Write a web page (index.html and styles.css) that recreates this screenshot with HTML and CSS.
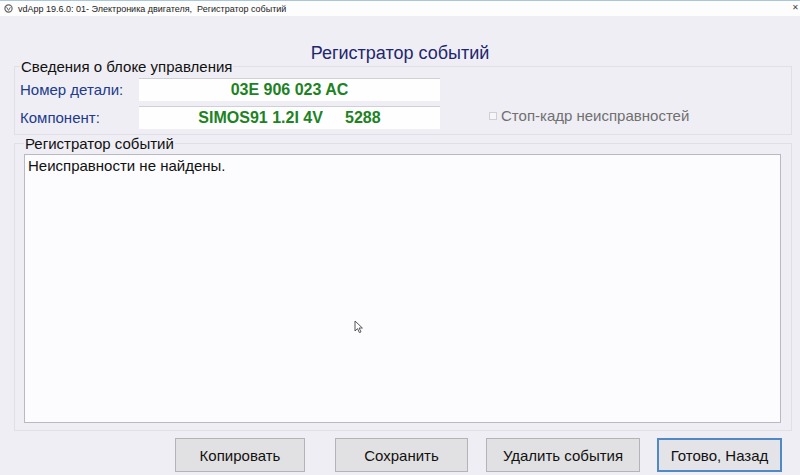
FILE: index.html
```html
<!DOCTYPE html>
<html lang="ru">
<head>
    <meta charset="UTF-8">
    <title>vdApp 19.6.0: 01- Электроника двигателя, Регистратор событий</title>
    <link rel="stylesheet" href="styles.css">
</head>
<body>
    <div class="titlebar">
        <svg class="app-icon" width="9" height="9" viewBox="0 0 9 9">
            <circle cx="4.5" cy="4.5" r="3.6" fill="none" stroke="#666" stroke-width="1.2"/>
            <path d="M2.6 3.2 L4.5 6.4 L6.4 3.2" fill="none" stroke="#666" stroke-width="1"/>
        </svg>
        <span class="title-text">vdApp 19.6.0: 01- Электроника двигателя,&nbsp; Регистратор событий</span>
        <span class="close-btn">✕</span>
    </div>

    <h1 class="heading">Регистратор событий</h1>

    <fieldset class="group info-group">
        <legend>Сведения о блоке управления</legend>
        <div class="info-body">
            <div class="info-rows">
                <div class="info-row">
                    <span class="info-label">Номер детали:</span>
                    <div class="info-value">03E 906 023 AC</div>
                </div>
                <div class="info-row">
                    <span class="info-label">Компонент:</span>
                    <div class="info-value">SIMOS91 1.2I 4V     5288</div>
                </div>
            </div>
            <label class="freeze-frame">
                <span class="check-box"></span>
                Стоп-кадр неисправностей
            </label>
        </div>
    </fieldset>

    <fieldset class="group log-group">
        <legend>Регистратор событий</legend>
        <div class="log-box">Неисправности не найдены.</div>
    </fieldset>

    <div class="button-bar">
        <button class="btn btn-copy">Копировать</button>
        <button class="btn btn-save">Сохранить</button>
        <button class="btn btn-delete">Удалить события</button>
        <button class="btn btn-done">Готово, Назад</button>
    </div>

    <svg class="cursor" width="10" height="14" viewBox="0 0 10 14">
        <path d="M1 1 L1 11 L3.5 8.6 L5.4 12.6 L7 11.9 L5.1 8 L8.4 8 Z" fill="#fff" stroke="#555" stroke-width="1"/>
    </svg>
</body>
</html>
```

FILE: styles.css
```css
body {
    margin: 0;
    padding: 0;
    width: 800px;
    height: 475px;
    overflow: hidden;
    position: relative;
    background-color: #efeef4;
    font-family: 'Liberation Sans', Arial, sans-serif;
    color: #111;
}

.titlebar {
    height: 15px;
    background-color: #fdfdfd;
    border-top: 1px solid #a9c6dc;
    display: flex;
    align-items: center;
    padding-left: 4px;
    font-size: 9px;
    color: #222;
    position: relative;
}

.app-icon {
    margin-right: 5px;
}

.close-btn {
    position: absolute;
    right: 1px;
    top: 2px;
    font-size: 8px;
    color: #444;
}

.heading {
    margin: 29px 0 -3px;
    font-size: 18px;
    line-height: 16px;
    font-weight: normal;
    color: #1f2670;
    text-align: center;
}

.group {
    border: 1px solid #e0dfe6;
    margin: 0 8px 0 14px;
    min-width: 0;
}

.group legend {
    font-size: 15px;
    line-height: 17px;
    padding: 0 1px;
    margin-left: 0;
    color: #111;
}

.info-group {
    padding: 3px 10px 5px 5px;
}

.info-body {
    display: flex;
    align-items: flex-end;
}

.info-rows {
    display: flex;
    flex-direction: column;
    gap: 5px;
}

.info-row {
    display: flex;
    align-items: center;
}

.info-label {
    width: 119px;
    font-size: 15px;
    color: #203a8c;
}

.info-value {
    width: 301px;
    height: 22px;
    line-height: 22px;
    background-color: #fefeff;
    border-top: 1px solid #cfcfd4;
    text-align: center;
    white-space: pre;
    font-size: 16px;
    font-weight: bold;
    color: #1d821f;
}

.freeze-frame {
    display: flex;
    align-items: center;
    margin: 0 0 5px 49px;
    font-size: 15px;
    color: #707070;
}

.check-box {
    width: 6px;
    height: 6px;
    border: 1px solid #d0d0d4;
    background-color: #f6f6f8;
    margin-right: 4px;
}

.log-group {
    padding: 2px 10px 7px 9px;
}

.log-box {
    height: 263px;
    background-color: #fcfcfe;
    border: 1px solid #b9b9c0;
    padding: 2px 3px;
    font-size: 15px;
    line-height: 18px;
    color: #111;
}

.button-bar {
    display: flex;
    justify-content: flex-end;
    padding: 7px 18px 0 0;
}

.btn {
    height: 34px;
    font-family: 'Liberation Sans', Arial, sans-serif;
    font-size: 15px;
    color: #111;
    background-color: #e1e1e3;
    border: 1px solid #b4b4b8;
    padding: 0;
}

.btn-copy {
    width: 130px;
}

.btn-save {
    width: 133px;
    margin-left: 30px;
}

.btn-delete {
    width: 154px;
    margin-left: 18px;
}

.btn-done {
    width: 125px;
    margin-left: 17px;
    border: 2px solid #4f8ac4;
    background-color: #e4e4e8;
}

.cursor {
    position: absolute;
    left: 354px;
    top: 320px;
}
```
